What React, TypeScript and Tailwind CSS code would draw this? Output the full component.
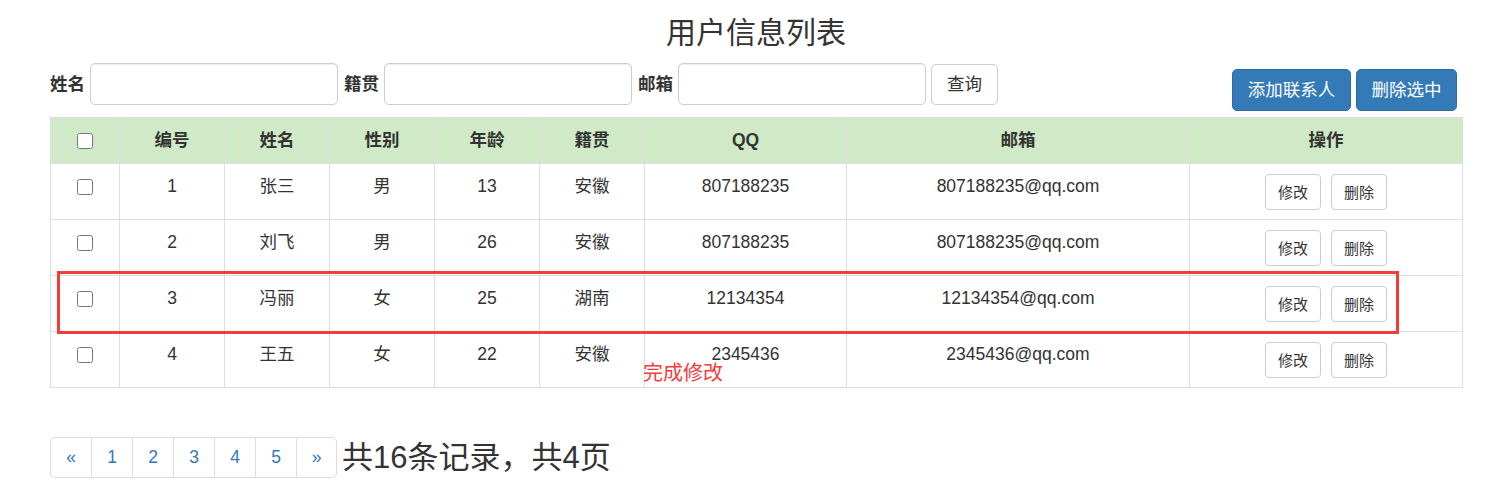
import React from "react";

const rows = [
  { id: 1, name: "张三", gender: "男", age: 13, place: "安徽", qq: "807188235", email: "807188235@qq.com" },
  { id: 2, name: "刘飞", gender: "男", age: 26, place: "安徽", qq: "807188235", email: "807188235@qq.com" },
  { id: 3, name: "冯丽", gender: "女", age: 25, place: "湖南", qq: "12134354", email: "12134354@qq.com" },
  { id: 4, name: "王五", gender: "女", age: 22, place: "安徽", qq: "2345436", email: "2345436@qq.com" },
];

const headers = ["编号", "姓名", "性别", "年龄", "籍贯", "QQ", "邮箱", "操作"];
const widths = [69, 105, 105, 105, 105, 105, 202, 343, 273];

function Field({ label }: { label: string }) {
  return (
    <div className="flex items-center">
      <span className="font-bold text-[17.5px] leading-[25px] text-[#333]">{label}</span>
      <input
        type="text"
        className="ml-[5px] w-[248px] h-[42px] border border-[#ccc] rounded-[5px] bg-white shadow-[inset_0_1px_1px_rgba(0,0,0,0.075)] outline-none"
      />
    </div>
  );
}

export default function App() {
  return (
    <div
      className="relative w-[1510px] h-[503px] bg-white text-[#333]"
      style={{ fontFamily: '"Liberation Sans", "Noto Sans CJK SC", sans-serif' }}
    >
      <div className="ml-[50px] w-[1412px] pt-[16px]">
        <h3 className="text-center text-[30px] leading-[33px] font-normal text-[#333]">用户信息列表</h3>

        <div className="mt-[14px] flex items-start justify-between">
          <div className="flex items-center gap-[6px]">
            <Field label="姓名" />
            <Field label="籍贯" />
            <Field label="邮箱" />
            <button className="ml-[-1px] w-[67px] h-[41px] border border-[#ccc] rounded-[5px] bg-white text-[17.5px] text-[#333]">
              查询
            </button>
          </div>
          <div className="mt-[6px] mr-[5px] flex gap-[5px]">
            <button className="w-[119px] h-[42px] rounded-[5px] bg-[#337ab7] border border-[#2e6da4] text-white text-[17.5px]">
              添加联系人
            </button>
            <button className="w-[101px] h-[42px] rounded-[5px] bg-[#337ab7] border border-[#2e6da4] text-white text-[17.5px]">
              删除选中
            </button>
          </div>
        </div>

        <table className="mt-[6px] w-[1412px] table-fixed border-collapse border border-[#ddd] text-[17.5px] leading-[25px]">
          <colgroup>
            {widths.map((w, i) => (
              <col key={i} style={{ width: w }} />
            ))}
          </colgroup>
          <thead>
            <tr className="bg-[#d0e9c6]">
              <th className="border border-[#ddd] py-[10px] px-[10px] align-top">
                <div className="flex h-[25px] items-center justify-center">
                  <input type="checkbox" className="w-4 h-4 m-0" />
                </div>
              </th>
              {headers.map((h) => (
                <th key={h} className="border border-[#ddd] py-[10px] px-[10px] font-bold text-center align-top">
                  {h}
                </th>
              ))}
            </tr>
          </thead>
          <tbody>
            {rows.map((r) => (
              <tr key={r.id}>
                <td className="border border-[#ddd] py-[10px] px-[10px] align-top">
                  <div className="flex h-[25px] items-center justify-center">
                    <input type="checkbox" className="w-4 h-4 m-0" />
                  </div>
                </td>
                <td className="border border-[#ddd] py-[10px] px-[10px] text-center align-top">{r.id}</td>
                <td className="border border-[#ddd] py-[10px] px-[10px] text-center align-top">{r.name}</td>
                <td className="border border-[#ddd] py-[10px] px-[10px] text-center align-top">{r.gender}</td>
                <td className="border border-[#ddd] py-[10px] px-[10px] text-center align-top">{r.age}</td>
                <td className="border border-[#ddd] py-[10px] px-[10px] text-center align-top">{r.place}</td>
                <td className="border border-[#ddd] py-[10px] px-[10px] text-center align-top">{r.qq}</td>
                <td className="border border-[#ddd] py-[10px] px-[10px] text-center align-top">{r.email}</td>
                <td className="border border-[#ddd] pt-[10px] pb-[9px] px-[10px] align-top">
                  <div className="flex justify-center gap-[10px]">
                    <button className="w-[56px] h-[36px] border border-[#ccc] rounded-[4px] bg-white text-[15px] text-[#333]">
                      修改
                    </button>
                    <button className="w-[56px] h-[36px] border border-[#ccc] rounded-[4px] bg-white text-[15px] text-[#333]">
                      删除
                    </button>
                  </div>
                </td>
              </tr>
            ))}
          </tbody>
        </table>

        <div className="mt-[49px] flex items-center">
          <div className="flex">
            {["«", "1", "2", "3", "4", "5", "»"].map((p, i, a) => (
              <span
                key={i}
                className={
                  "flex w-[41px] h-[41px] items-center justify-center border-y border-l border-[#ddd] text-[17.5px] text-[#337ab7] bg-white " +
                  (i === 0 ? "rounded-l-[5px] " : "") +
                  (i === a.length - 1 ? "border-r rounded-r-[5px]" : "")
                }
              >
                {p}
              </span>
            ))}
          </div>
          <span className="ml-[5px] text-[31px] leading-[33px] text-[#333]">共16条记录，共4页</span>
        </div>
      </div>

      <div className="absolute left-[57px] top-[271px] w-[1342px] h-[63px] border-[3px] border-[#f43c3c] pointer-events-none" />
      <div className="absolute left-[643px] top-[361px] text-[20px] leading-[25px] text-[#f43c3c]">完成修改</div>
    </div>
  );
}
